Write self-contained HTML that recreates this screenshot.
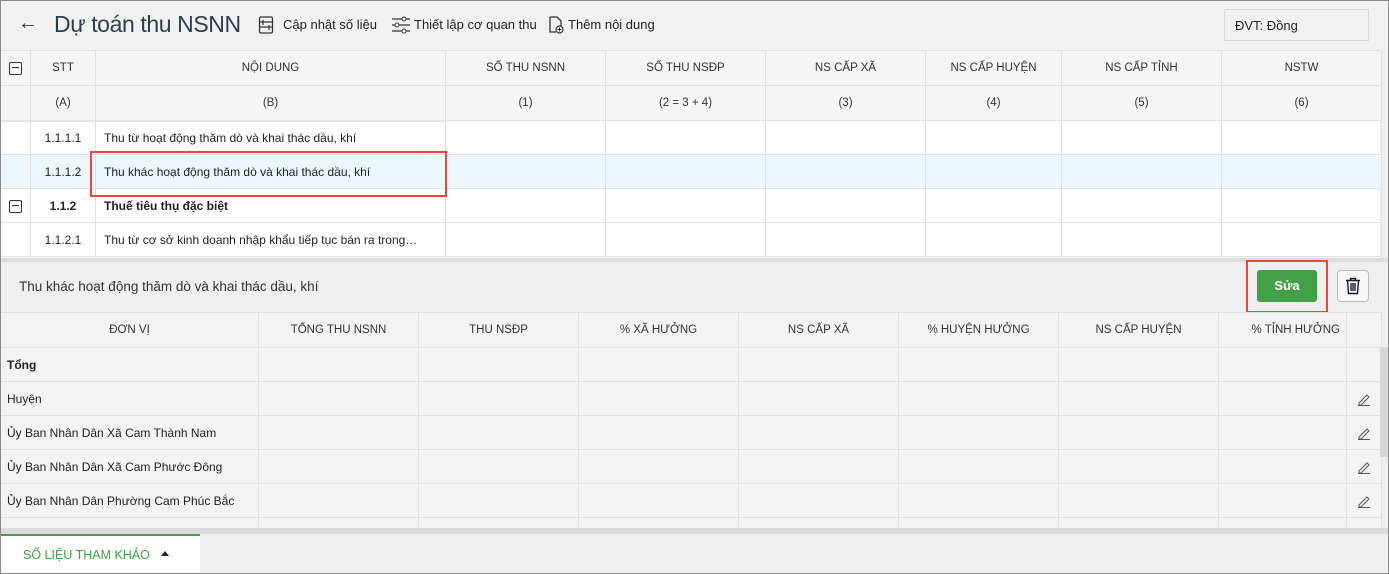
<!DOCTYPE html>
<html><head><meta charset="utf-8"><style>
*{box-sizing:border-box;margin:0;padding:0}
body{width:1389px;height:574px;overflow:hidden;background:#efefef;font-family:"Liberation Sans",sans-serif;color:#222;position:relative}
.frame{position:absolute;left:0;top:0;width:1389px;height:574px;border:1px solid #8a8a8a;pointer-events:none;z-index:9}
.hdr{position:absolute;left:0;top:0;width:1389px;height:50px;background:#f1f1f1}
.abs{position:absolute;white-space:nowrap}
table{border-collapse:collapse;table-layout:fixed;position:absolute}
td{border:1px solid #e0e0e0;font-size:12px;white-space:nowrap;overflow:hidden}
.t1 td{height:34px}
.t1 .h td{background:#f5f5f5;text-align:center;color:#333;font-size:11.5px;height:35px}
.t2{background:#f3f3f3}
.t2 td{height:34px;padding-left:6px}
.t2 .h td{text-align:center;font-size:11.5px;color:#333;padding:0;height:35px}
.minus{display:inline-block;width:13px;height:13px;border:1.5px solid #333;border-radius:2px;position:relative;vertical-align:middle}
.minus:after{content:"";position:absolute;left:2px;right:2px;top:4px;height:1.5px;background:#333}
.pen{position:absolute;right:10px;top:10px}
</style></head><body>
<div class="hdr"></div>
<div class="abs" style="left:18px;top:12px;font-size:20px;color:#333">←</div>
<div class="abs" style="left:54px;top:11px;font-size:23px;color:#2c3e50;letter-spacing:-0.4px">Dự toán thu NSNN</div>
<svg class="abs" style="left:258px;top:16px" width="16" height="18" viewBox="0 0 16 18"><rect x="1.5" y="1" width="13" height="16" rx="1.5" fill="none" stroke="#333" stroke-width="1.3"/><path d="M1.5 6h13M1.5 11h13M5 4v5M11 9v5" stroke="#333" stroke-width="1.2"/></svg>
<div class="abs" style="left:283px;top:17px;font-size:13px">Cập nhật số liệu</div>
<svg class="abs" style="left:391px;top:16px" width="20" height="18" viewBox="0 0 20 18"><path d="M1 3h18M1 9h18M1 15h18" stroke="#333" stroke-width="1.3"/><circle cx="13" cy="3" r="2" fill="#fff" stroke="#333"/><circle cx="6" cy="9" r="2" fill="#fff" stroke="#333"/><circle cx="13" cy="15" r="2" fill="#fff" stroke="#333"/></svg>
<div class="abs" style="left:414px;top:17px;font-size:13px">Thiết lập cơ quan thu</div>
<svg class="abs" style="left:548px;top:16px" width="16" height="18" viewBox="0 0 16 18"><path d="M2 1h7l4 4v5M2 1v15h6" fill="none" stroke="#333" stroke-width="1.3"/><circle cx="11.5" cy="13.5" r="3.5" fill="#fff" stroke="#333" stroke-width="1.2"/><path d="M11.5 11.5v4M9.5 13.5h4" stroke="#333"/></svg>
<div class="abs" style="left:568px;top:17px;font-size:13px">Thêm nội dung</div>
<div class="abs" style="left:1224px;top:9px;width:145px;height:32px;border:1px solid #d8d8d8;font-size:13px;padding:8px 10px">ĐVT: Đồng</div>

<div style="position:absolute;left:0;top:50px;width:1380px;height:210px;background:#fff"></div>
<table class="t1" style="left:0;top:50px;width:1381px">
<colgroup><col style="width:30px"><col style="width:65px"><col style="width:350px"><col style="width:160px"><col style="width:160px"><col style="width:160px"><col style="width:136px"><col style="width:160px"><col style="width:160px"></colgroup>
<tr class="h"><td><span class="minus"></span></td><td>STT</td><td>NỘI DUNG</td><td>SỐ THU NSNN</td><td>SỐ THU NSĐP</td><td>NS CẤP XÃ</td><td>NS CẤP HUYỆN</td><td>NS CẤP TỈNH</td><td>NSTW</td></tr>
<tr class="h"><td></td><td>(A)</td><td>(B)</td><td>(1)</td><td>(2 = 3 + 4)</td><td>(3)</td><td>(4)</td><td>(5)</td><td>(6)</td></tr>
<tr><td style="border-top:2px solid #e6e6e6"></td><td style="text-align:center;border-top:2px solid #e6e6e6">1.1.1.1</td><td style="padding-left:8px;border-top:2px solid #e6e6e6">Thu từ hoạt động thăm dò và khai thác dầu, khí</td><td></td><td></td><td></td><td></td><td></td><td></td></tr>
<tr style="background:#eef6fd"><td></td><td style="text-align:center">1.1.1.2</td><td style="padding-left:8px">Thu khác hoạt động thăm dò và khai thác dầu, khí</td><td></td><td></td><td></td><td></td><td></td><td></td></tr>
<tr><td style="text-align:center"><span class="minus"></span></td><td style="text-align:center;font-weight:bold">1.1.2</td><td style="padding-left:8px;font-weight:bold">Thuế tiêu thụ đặc biệt</td><td></td><td></td><td></td><td></td><td></td><td></td></tr>
<tr><td></td><td style="text-align:center">1.1.2.1</td><td style="padding-left:8px">Thu từ cơ sở kinh doanh nhập khẩu tiếp tục bán ra trong…</td><td></td><td></td><td></td><td></td><td></td><td></td></tr>
</table>
<div class="abs" style="left:90px;top:151px;width:357px;height:46px;border:2px solid #e8493f"></div>

<div class="abs" style="left:0;top:258px;width:1389px;height:4px;background:#dcdcdc"></div>
<div class="abs" style="left:0;top:262px;width:1389px;height:50px;background:#efefef"></div>
<div class="abs" style="left:19px;top:279px;font-size:13.5px;color:#333">Thu khác hoạt động thăm dò và khai thác dầu, khí</div>
<div class="abs" style="left:1246px;top:260px;width:82px;height:53px;border:2px solid #e8493f"></div>
<div class="abs" style="left:1257px;top:270px;width:60px;height:32px;background:#43a047;border-radius:3px;color:#fff;font-weight:bold;font-size:13px;text-align:center;line-height:32px">Sửa</div>
<div class="abs" style="left:1337px;top:270px;width:32px;height:32px;border:1px solid #bbb;border-radius:4px;background:#f7f7f7"></div>
<svg class="abs" style="left:1345px;top:277px" width="16" height="18" viewBox="0 0 16 18"><path d="M1 3.5h14M5.5 3.5V1.5h5v2M2.5 3.5l1 13h9l1-13M6 6v8M8 6v8M10 6v8" fill="none" stroke="#1a1a2e" stroke-width="1.4"/></svg>

<table class="t2" style="left:0;top:312px;width:1381px">
<colgroup><col style="width:258px"><col style="width:160px"><col style="width:160px"><col style="width:160px"><col style="width:160px"><col style="width:160px"><col style="width:160px"><col style="width:128px"><col style="width:35px"></colgroup>
<tr class="h"><td>ĐƠN VỊ</td><td>TỔNG THU NSNN</td><td>THU NSĐP</td><td>% XÃ HƯỞNG</td><td>NS CẤP XÃ</td><td>% HUYỆN HƯỞNG</td><td>NS CẤP HUYỆN</td><td style="text-align:right;padding-right:6px">% TỈNH HƯỞNG</td><td></td></tr>
<tr><td style="font-weight:bold">Tổng</td><td></td><td></td><td></td><td></td><td></td><td></td><td></td><td></td></tr>
<tr><td>Huyện</td><td></td><td></td><td></td><td></td><td></td><td></td><td></td><td style="position:relative"><svg class="pen" width="14" height="14" viewBox="0 0 14 14"><path d="M2 11l8-8 2 2-8 8H2zM1 13.5h12" fill="none" stroke="#555" stroke-width="1"/></svg></td></tr>
<tr><td>Ủy Ban Nhân Dân Xã Cam Thành Nam</td><td></td><td></td><td></td><td></td><td></td><td></td><td></td><td style="position:relative"><svg class="pen" width="14" height="14" viewBox="0 0 14 14"><path d="M2 11l8-8 2 2-8 8H2zM1 13.5h12" fill="none" stroke="#555" stroke-width="1"/></svg></td></tr>
<tr><td>Ủy Ban Nhân Dân Xã Cam Phước Đông</td><td></td><td></td><td></td><td></td><td></td><td></td><td></td><td style="position:relative"><svg class="pen" width="14" height="14" viewBox="0 0 14 14"><path d="M2 11l8-8 2 2-8 8H2zM1 13.5h12" fill="none" stroke="#555" stroke-width="1"/></svg></td></tr>
<tr><td>Ủy Ban Nhân Dân Phường Cam Phúc Bắc</td><td></td><td></td><td></td><td></td><td></td><td></td><td></td><td style="position:relative"><svg class="pen" width="14" height="14" viewBox="0 0 14 14"><path d="M2 11l8-8 2 2-8 8H2zM1 13.5h12" fill="none" stroke="#555" stroke-width="1"/></svg></td></tr>
<tr><td style="height:12px"></td><td></td><td></td><td></td><td></td><td></td><td></td><td></td><td></td></tr>
</table>
<div class="abs" style="left:1380px;top:347px;width:9px;height:110px;background:#d6d6d6"></div>
<div class="abs" style="left:0;top:528px;width:1389px;height:6px;background:#dcdcdc"></div>
<div class="abs" style="left:0;top:534px;width:1389px;height:40px;background:#efefef"></div>
<div class="abs" style="left:0;top:534px;width:200px;height:40px;background:#fff;border-top:2px solid #43a047"></div>
<div class="abs" style="left:23px;top:548px;font-size:12.5px;color:#43a047">SỐ LIỆU THAM KHẢO</div>
<div class="abs" style="left:161px;top:551px;width:0;height:0;border-left:4px solid transparent;border-right:4px solid transparent;border-bottom:5px solid #222"></div>
<div class="frame"></div>
</body></html>
